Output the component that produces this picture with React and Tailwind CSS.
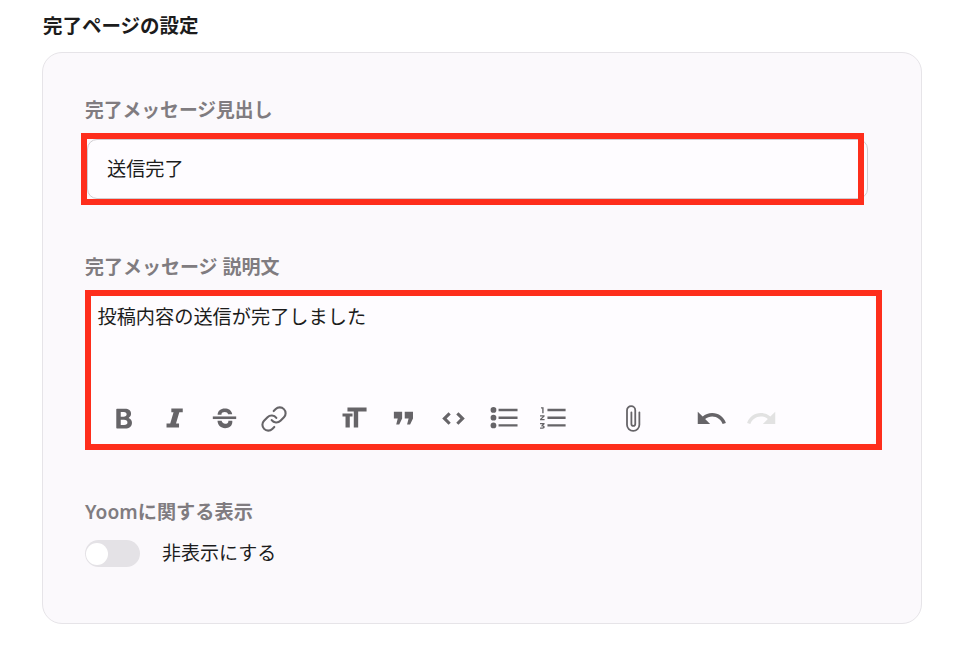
import { Link } from "lucide-react";

const font = { fontFamily: '"Noto Sans", "Noto Sans CJK JP", sans-serif' };

function Icon({ children, className = "" }) {
  return (
    <svg viewBox="0 0 24 24" className={`w-[33px] h-[33px] ${className}`} fill="currentColor">
      {children}
    </svg>
  );
}

function Tool({ children, muted }) {
  return (
    <div className={`w-[50px] flex justify-center items-center ${muted ? "text-[#e2e2e2]" : "text-[#666468]"}`}>
      {children}
    </div>
  );
}

function Toolbar() {
  return (
    <div className="flex items-center gap-[29px]">
      <div className="flex">
        <Tool>
          <Icon>
            <path d="M6.522 19.242a.5.5 0 0 1-.5-.5V5.35a.5.5 0 0 1 .5-.5h5.783c1.347 0 2.46.345 3.24.982.783.64 1.216 1.562 1.216 2.683 0 1.13-.587 2.129-1.476 2.71a.35.35 0 0 0 .049.613c1.259.56 2.101 1.742 2.101 3.22 0 1.282-.483 2.334-1.363 3.063-.876.726-2.132 1.12-3.66 1.12h-5.89ZM9.27 7.347v3.362h1.97c.766 0 1.347-.17 1.733-.464.38-.291.587-.716.587-1.27 0-.53-.183-.928-.513-1.198-.334-.273-.838-.43-1.505-.43H9.27Zm0 5.606v3.791h2.389c.832 0 1.448-.177 1.853-.497.399-.315.614-.786.614-1.423 0-.62-.22-1.077-.63-1.385-.418-.313-1.053-.486-1.905-.486H9.27Z" />
          </Icon>
        </Tool>
        <Tool>
          <Icon>
            <path d="M9.7 4.700H18v2.800h-2.500l-2.400 8.200h2.200v2.800H6.200v-2.800h2.700l2.400-8.200H9.700V4.700Z" />
          </Icon>
        </Tool>
        <Tool>
          <Icon>
            <path d="M3.500 10.500h17v1.900h-17v-1.900Z" />
            <path d="M7 9.300c0-2.900 2.300-4.600 5.200-4.600 2.700 0 5 1.200 5.400 4.200h-3c-.3-1-1.100-1.600-2.400-1.600-1.300 0-2.400.6-2.400 1.600v.4H7Z" />
            <path d="M6.900 13.700h3c.3 1.300 1.300 2.100 2.600 2.100 1.300 0 2.300-.6 2.300-1.700v-.4h2.800c.1.300.1.500.1.800 0 2.800-2.300 4.500-5.300 4.500-3 0-5.200-1.700-5.500-5.300Z" />
          </Icon>
        </Tool>
        <Tool>
          <Link size={28} strokeWidth={1.8} />
        </Tool>
      </div>
      <div className="flex">
        <Tool>
          <Icon>
            <path d="M7.600 4h13.900v2.900h-6.100v11.600h-3.200V6.900H7.600V4Z" />
            <path d="M4 8.400h7.300v2.100H9.300v8H6.200v-8H4V8.400Z" />
          </Icon>
        </Tool>
        <Tool>
          <Icon>
            <path d="M5 7h6v5L8.900 16.400H6.700l1.100-4.400H5V7Zm7.900 0h6v5l-2.100 4.400h-2.200l1.100-4.400h-2.800V7Z" />
          </Icon>
        </Tool>
        <Tool>
          <Icon>
            <path d="M8.400 7.400 10 9l-3 3 3 3-1.600 1.600L3.800 12l4.600-4.600Zm7.200 0L20.200 12l-4.600 4.600L14 15l3-3-3-3 1.600-1.600Z" />
          </Icon>
        </Tool>
        <Tool>
          <Icon>
            <circle cx="4.700" cy="5.800" r="2.100" />
            <circle cx="4.700" cy="11.400" r="2.100" />
            <circle cx="4.700" cy="17" r="2.100" />
            <path d="M8.400 4.900h13.800v1.800H8.400V4.900Zm0 5.600h13.800v1.800H8.400v-1.800Zm0 5.600h13.800v1.800H8.400v-1.800Z" />
          </Icon>
        </Tool>
        <Tool>
          <Icon>
            <path d="M7.600 4.900h13.200v1.800H7.600V4.900Zm0 5.600h13.200v1.800H7.600v-1.800Zm0 5.600h13.200v1.800H7.600v-1.800Z" />
            <path d="M2.900 3.800h1.900v4.300h-1V4.700h-.9v-.9ZM2.200 9.700h3.300v.9l-2 1.700h2v.9H2.200v-.9l2-1.700h-2v-.9ZM2.200 15.300h3.300v.8l-1.100 1c.8.100 1.200.5 1.200 1.100 0 .7-.6 1.200-1.600 1.200H2.200v-.9h1.700c.4 0 .6-.1.600-.3 0-.2-.2-.3-.6-.3h-.8v-.7l.9-1h-1.800v-.9Z" />
          </Icon>
        </Tool>
      </div>
      <div className="flex">
        <Tool>
          <Icon>
            <path
              d="M17 7.500v9a4.500 4.500 0 0 1-9 0V6a3 3 0 0 1 6 0v10a1.400 1.400 0 0 1-2.800 0V7.500"
              fill="none"
              stroke="currentColor"
              strokeWidth="1.300"
              strokeLinecap="round"
            />
          </Icon>
        </Tool>
      </div>
      <div className="flex">
        <Tool>
          <Icon>
            <path d="M12.500 8c-2.650 0-5.050.99-6.900 2.600L2 7v9h9l-3.620-3.620c1.390-1.160 3.160-1.880 5.120-1.880 3.540 0 6.550 2.310 7.600 5.500l2.370-.78C21.080 11.030 17.150 8 12.500 8z" />
          </Icon>
        </Tool>
        <Tool muted>
          <Icon>
            <path d="M18.400 10.600C16.550 8.990 14.150 8 11.500 8c-4.650 0-8.580 3.030-9.960 7.220L3.900 16c1.050-3.190 4.050-5.500 7.600-5.500 1.950 0 3.730.72 5.120 1.880L13 16h9V7l-3.600 3.600z" />
          </Icon>
        </Tool>
      </div>
    </div>
  );
}

export default function App() {
  return (
    <div style={font} className="w-[957px] h-[646px] bg-white pl-[43px] pr-[35px] overflow-hidden">
      <h2 className="h-[52px] pt-[10px] text-[19.500px] leading-[32px] font-semibold text-[#1c1c1c]">完了ページの設定</h2>
      <div className="-ml-[1px] h-[572px] border border-[#e6e4e8] rounded-[20px] bg-[#fbf9fc] pt-[43px] pl-[42px] pr-[53px]">
        <label className="block h-[28px] text-[18.800px] leading-[28px] font-semibold text-[#807c80]">完了メッセージ見出し</label>
        <div className="relative mt-[15px] ml-[2px] h-[60px] bg-[#fefcff] border border-[#cfcdd1] rounded-[10px] flex items-center pl-[19px] text-[19.200px] text-[#1c1c1c]">
          送信完了
          <div className="absolute -left-[7px] -top-[7px] w-[783px] h-[72px] border-[6px] border-[#fe2e1c]"></div>
        </div>

        <label className="block mt-[54px] h-[28px] text-[19px] leading-[28px] font-semibold text-[#807c80]">完了メッセージ 説明文</label>
        <div className="relative mt-[15px] h-[148px] w-[790px] ml-[2px] bg-[#fefcff] rounded-[10px] pl-[11px] pt-[6px] flex flex-col text-[19.200px] text-[#1c1c1c]">
          <p className="leading-[30px] -ml-[0.500px]">投稿内容の送信が完了しました</p>
          <div className="mt-auto mb-[9px] ml-[1px]">
            <Toolbar />
          </div>
          <div className="absolute -left-[2px] -top-[6px] w-[797px] h-[160px] border-[6px] border-[#fe2e1c]"></div>
        </div>

        <label className="block mt-[54px] h-[28px] text-[19.200px] leading-[28px] font-semibold text-[#807c80]">Yoomに関する表示</label>
        <div className="mt-[14px] h-[27px] flex items-center">
          <div className="w-[55px] h-[27px] rounded-full bg-[#e4e2e6] flex items-center pl-[1px]">
            <div className="w-[22px] h-[22px] rounded-full bg-white"></div>
          </div>
          <span className="ml-[22px] text-[19px] text-[#1c1c1c]">非表示にする</span>
        </div>
      </div>
    </div>
  );
}
